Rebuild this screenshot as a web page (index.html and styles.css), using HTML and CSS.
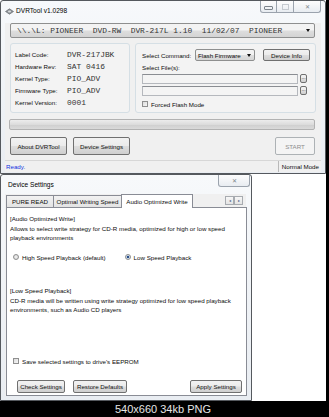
FILE: index.html
```html
<!DOCTYPE html>
<html>
<head>
  <meta charset="UTF-8">
  <title>DVRTool v1.0298</title>
  <link rel="stylesheet" href="styles.css">
</head>
<body>
<div class="shot">
  <div class="win main-win">
    <div class="titlebar">
      <svg class="app-icon" width="9" height="7" viewBox="0 0 9 7">
        <path d="M0.5 3.5 L4.5 0.8 L8.5 3.5 L4.5 6.2 Z" fill="#8c9196" stroke="#5d6166" stroke-width="0.6"/>
        <ellipse cx="4.5" cy="3.5" rx="1.6" ry="1" fill="#d8dadc"/>
      </svg>
      <span class="title">DVRTool v1.0298</span>
      <div class="caption-btns">
        <span class="cb"><i class="g-min"></i></span>
        <span class="cb"><i class="g-max"></i></span>
        <span class="cb cb-close">&#x2715;</span>
      </div>
    </div>
    <div class="client">
      <div class="drive-combo">
        <span class="mono">\\.\L: PIONEER  DVD-RW  DVR-217L 1.10  11/02/07  PIONEER</span>
        <span class="arrow"></span>
      </div>
      <div class="groups">
        <div class="group info">
          <div class="row"><span class="lbl">Label Code:</span><span class="mono">DVR-217JBK</span></div>
          <div class="row"><span class="lbl">Hardware Rev:</span><span class="mono">SAT 0416</span></div>
          <div class="row"><span class="lbl">Kernel Type:</span><span class="mono">PIO_ADV</span></div>
          <div class="row"><span class="lbl">Firmware Type:</span><span class="mono">PIO_ADV</span></div>
          <div class="row"><span class="lbl">Kernel Version:</span><span class="mono">0001</span></div>
        </div>
        <div class="group cmd">
          <div class="cmd-row">
            <span class="cmd-lbl">Select Command:</span>
            <span class="small-combo">Flash Firmware<span class="arrow"></span></span>
            <span class="btn dev-info">Device Info</span>
          </div>
          <div class="files-lbl">Select File(s):</div>
          <div class="file-row"><span class="textbox"></span><span class="btn dots">...</span></div>
          <div class="file-row"><span class="textbox"></span><span class="btn dots">...</span></div>
          <div class="check-row"><span class="checkbox"></span>Forced Flash Mode</div>
        </div>
      </div>
      <div class="progress"></div>
      <div class="actions">
        <span class="btn big">About DVRTool</span>
        <span class="btn big">Device Settings</span>
        <span class="btn start">START</span>
      </div>
      <div class="statusbar">
        <span class="ready">Ready.</span>
        <span class="mode">Normal Mode</span>
      </div>
    </div>
  </div>

  <div class="lower">
    <div class="win dev-win">
      <div class="titlebar dev-title">
        <span class="title">Device Settings</span>
        <span class="cb cb-close wide">&#x2715;</span>
      </div>
      <div class="client dev-client">
        <div class="tabs">
          <span class="tab t1">PURE READ</span>
          <span class="tab t2">Optimal Writing Speed</span>
          <span class="tab active">Audio Optimized Write</span>
          <span class="tab-scroll"><span class="sb">&#9666;</span><span class="sb">&#9656;</span></span>
        </div>
        <div class="panel">
          <p class="para">[Audio Optimized Write]<br>Allows to select write strategy for CD-R media, optimized for high or low speed<br>playback environments</p>
          <div class="radios">
            <span class="radio-item"><span class="radio"></span>High Speed Playback (default)</span>
            <span class="radio-item second"><span class="radio on"></span>Low Speed Playback</span>
          </div>
          <p class="para low">[Low Speed Playback]<br>CD-R media will be written using write strategy optimized for low speed playback<br>environments, such as Audio CD players</p>
          <div class="check-row save"><span class="checkbox"></span>Save selected settings to drive's EEPROM</div>
          <div class="panel-btns">
            <span class="btn pb check">Check Settings</span>
            <span class="btn pb restore">Restore Defaults</span>
            <span class="btn pb apply">Apply Settings</span>
          </div>
        </div>
      </div>
    </div>
    <div class="desk"></div>
  </div>
</div>
<div class="caption">540x660 34kb PNG</div>
</body>
</html>
```

FILE: styles.css
```css
body {
  margin: 0;
  background-color: #000;
  font-family: "Liberation Sans", Arial, sans-serif;
  font-size: 6.2px;
  color: #0c0c0c;
}
.shot {
  width: 326px;
  height: 401px;
  background-color: #fff;
}
.win {
  box-sizing: border-box;
  border: 1px solid #55595e;
  background: linear-gradient(#f7f9fb, #e9edf2);
}
.main-win {
  width: 326px;
  height: 174px;
  border-radius: 3px 3px 0 0;
}
.titlebar {
  height: 19px;
  display: flex;
  align-items: center;
  padding-left: 4px;
}
.title {
  font-family: "Liberation Sans", sans-serif;
  font-size: 6.6px;
  color: #000;
  margin-left: 2px;
}
.app-icon {
  margin-top: 1px;
}
.caption-btns {
  display: flex;
  margin-left: auto;
  align-self: flex-start;
  margin-right: 4px;
}
.cb {
  box-sizing: border-box;
  width: 17px;
  height: 12px;
  border: 1px solid #9ba3ad;
  border-top: none;
  background: linear-gradient(#fdfdfd, #e8ecf1);
  display: flex;
  align-items: center;
  justify-content: center;
  color: #7c848c;
  font-size: 6px;
}
.cb + .cb {
  border-left: none;
}
.caption-btns .cb:first-child {
  border-radius: 0 0 0 3px;
}
.caption-btns .cb-close {
  width: 27px;
  border-radius: 0 0 3px 0;
}
.g-min {
  width: 7px;
  height: 2px;
  border: 1px solid #7c848c;
  border-radius: 1px;
  margin-top: 3px;
}
.g-max {
  width: 5px;
  height: 4px;
  border: 1px solid #c5cad0;
}
.client {
  margin: 0 4px 0 4px;
  background-color: #f0f0f0;
}
.drive-combo {
  box-sizing: border-box;
  margin: 3px 6px 0 5px;
  height: 15px;
  border: 1px solid #8e8f8f;
  border-radius: 2px;
  background: linear-gradient(#f3f3f3 45%, #dddddd 55%, #d4d4d4);
  display: flex;
  align-items: center;
  padding: 0 4px 0 6px;
}
.mono {
  font-family: "Liberation Mono", "Courier New", monospace;
  font-size: 7.9px;
  white-space: pre;
  color: #333;
}
.drive-combo .mono {
  flex: 1;
}
.arrow {
  width: 0;
  height: 0;
  border-left: 2.5px solid transparent;
  border-right: 2.5px solid transparent;
  border-top: 3px solid #111;
}
.groups {
  display: flex;
  margin: 5px 0 0 5px;
  height: 70px;
  gap: 5px;
}
.group {
  box-sizing: border-box;
  border: 1px solid #d5dfe5;
  border-radius: 3px;
  background-color: #f3f3f3;
}
.info {
  width: 120px;
  padding: 4px 0 0 4px;
}
.row {
  display: flex;
  align-items: center;
  height: 12px;
}
.lbl {
  width: 52px;
}
.cmd {
  width: 181px;
  padding: 5px 0 0 6px;
}
.cmd-row {
  display: flex;
  align-items: center;
  height: 12px;
}
.cmd-lbl {
  width: 53px;
}
.small-combo {
  box-sizing: border-box;
  width: 60px;
  height: 12px;
  border: 1px solid #8e8f8f;
  border-radius: 2px;
  background: linear-gradient(#f3f3f3 45%, #dedede 55%, #d6d6d6);
  display: flex;
  align-items: center;
  padding: 0 3px 0 2px;
  justify-content: space-between;
}
.btn {
  box-sizing: border-box;
  border: 1px solid #707070;
  border-radius: 2px;
  background: linear-gradient(#f2f2f2 0%, #ebebeb 48%, #dddddd 52%, #cfcfcf 100%);
  display: flex;
  align-items: center;
  justify-content: center;
  color: #111;
}
.dev-info {
  width: 47px;
  height: 12px;
  margin-left: 8px;
}
.files-lbl {
  height: 12px;
  line-height: 13px;
}
.file-row {
  display: flex;
  height: 10px;
  margin-top: 1px;
  gap: 2px;
}
.file-row + .file-row {
  margin-top: 2px;
}
.textbox {
  box-sizing: border-box;
  width: 156px;
  height: 10px;
  border: 1px solid #b5b8bd;
  border-top-color: #8a8d92;
  background-color: #f4f4f4;
}
.dots {
  width: 7px;
  height: 9px;
  font-size: 5px;
  align-items: flex-end;
  padding-bottom: 2px;
}
.check-row {
  display: flex;
  align-items: center;
  height: 10px;
  margin-top: 3px;
  gap: 3px;
}
.checkbox {
  box-sizing: border-box;
  width: 6px;
  height: 6px;
  border: 1px solid #8f8f8f;
  background: linear-gradient(135deg, #dcdcdc, #f6f6f6);
}
.progress {
  box-sizing: border-box;
  margin: 6px 6px 0 4px;
  height: 11px;
  border: 1px solid #b2b2b2;
  border-radius: 2px;
  background: linear-gradient(#ececec, #dcdcdc 50%, #cfcfcf 55%, #dadada);
}
.actions {
  display: flex;
  margin: 7px 6px 0 5px;
  height: 18px;
  gap: 6px;
}
.big {
  width: 57px;
  height: 18px;
}
.start {
  width: 40px;
  height: 18px;
  margin-left: auto;
  border-color: #adb2b5;
  background: #f4f4f4;
  color: #8d8d8d;
}
.statusbar {
  display: flex;
  margin-top: 5px;
  height: 12px;
  border-top: 1px solid #d7d7d7;
  box-sizing: border-box;
  align-items: center;
}
.ready {
  color: #1030e0;
  margin-left: 1px;
}
.mode {
  margin-left: auto;
  height: 11px;
  border-left: 1px solid #b9b9b9;
  padding: 0 2px 0 3px;
  display: flex;
  align-items: center;
}
.lower {
  display: flex;
}
.dev-win {
  width: 252px;
  height: 227px;
  border-radius: 3px 3px 0 0;
}
.dev-title {
  height: 19px;
  padding-left: 5px;
}
.dev-title .cb-close {
  width: 32px;
  height: 12px;
  margin-left: auto;
  margin-right: 1px;
  align-self: flex-start;
  border-top: none;
  border-radius: 0 0 3px 3px;
}
.dev-client {
  margin: 0 5px 0 4px;
  background-color: #f0f0f0;
}
.tabs {
  display: flex;
  height: 13px;
  align-items: flex-end;
  padding-left: 1px;
}
.tab {
  box-sizing: border-box;
  height: 12px;
  border: 1px solid #898c95;
  border-bottom: none;
  background: linear-gradient(#f2f2f2, #e3e3e3);
  display: flex;
  align-items: center;
  justify-content: center;
  margin-right: -1px;
}
.t1 {
  width: 48px;
}
.t2 {
  width: 69px;
}
.tab.active {
  width: 72px;
  height: 14px;
  background: #fff;
  margin-bottom: -1px;
  z-index: 1;
}
.tab-scroll {
  display: flex;
  margin-left: auto;
  margin-right: 3px;
  margin-bottom: 2px;
}
.sb {
  box-sizing: border-box;
  width: 9px;
  height: 9px;
  border: 1px solid #a7abb0;
  background: linear-gradient(#f7f7f7, #e4e4e4);
  font-size: 4px;
  color: #4d6185;
  display: flex;
  align-items: center;
  justify-content: center;
}
.panel {
  box-sizing: border-box;
  height: 189px;
  width: 241px;
  margin-left: 1px;
  border: 1px solid #898c95;
  background-color: #fff;
  padding: 6px 0 0 3px;
  display: flex;
  flex-direction: column;
}
.para {
  margin: 0;
  line-height: 9.5px;
}
.radios {
  display: flex;
  margin-top: 9.5px;
  height: 10px;
  align-items: center;
  padding-left: 3px;
}
.radio-item {
  display: flex;
  align-items: center;
  gap: 3px;
}
.radio-item.second {
  margin-left: 19px;
}
.radio {
  box-sizing: border-box;
  width: 6px;
  height: 6px;
  border-radius: 50%;
  border: 1px solid #8e8f8f;
  background: radial-gradient(#f4f4f4, #d2d2d2);
}
.radio.on {
  background: radial-gradient(circle, #2a4f8a 0 1.3px, #d6e1ee 1.6px);
}
.para.low {
  margin-top: 24px;
}
.save {
  margin-top: 41.5px;
  padding-left: 3px;
}
.panel-btns {
  display: flex;
  margin-top: 14px;
  padding-left: 7px;
  gap: 8px;
}
.pb {
  height: 13px;
}
.check {
  width: 48px;
}
.restore {
  width: 54px;
}
.apply {
  width: 52px;
  margin-left: auto;
  margin-right: 4px;
}
.desk {
  flex: 1;
  background-color: #fff;
}
.caption {
  width: 326px;
  height: 16px;
  color: #e6e6e6;
  font-size: 11px;
  text-align: center;
  line-height: 16px;
}
```
